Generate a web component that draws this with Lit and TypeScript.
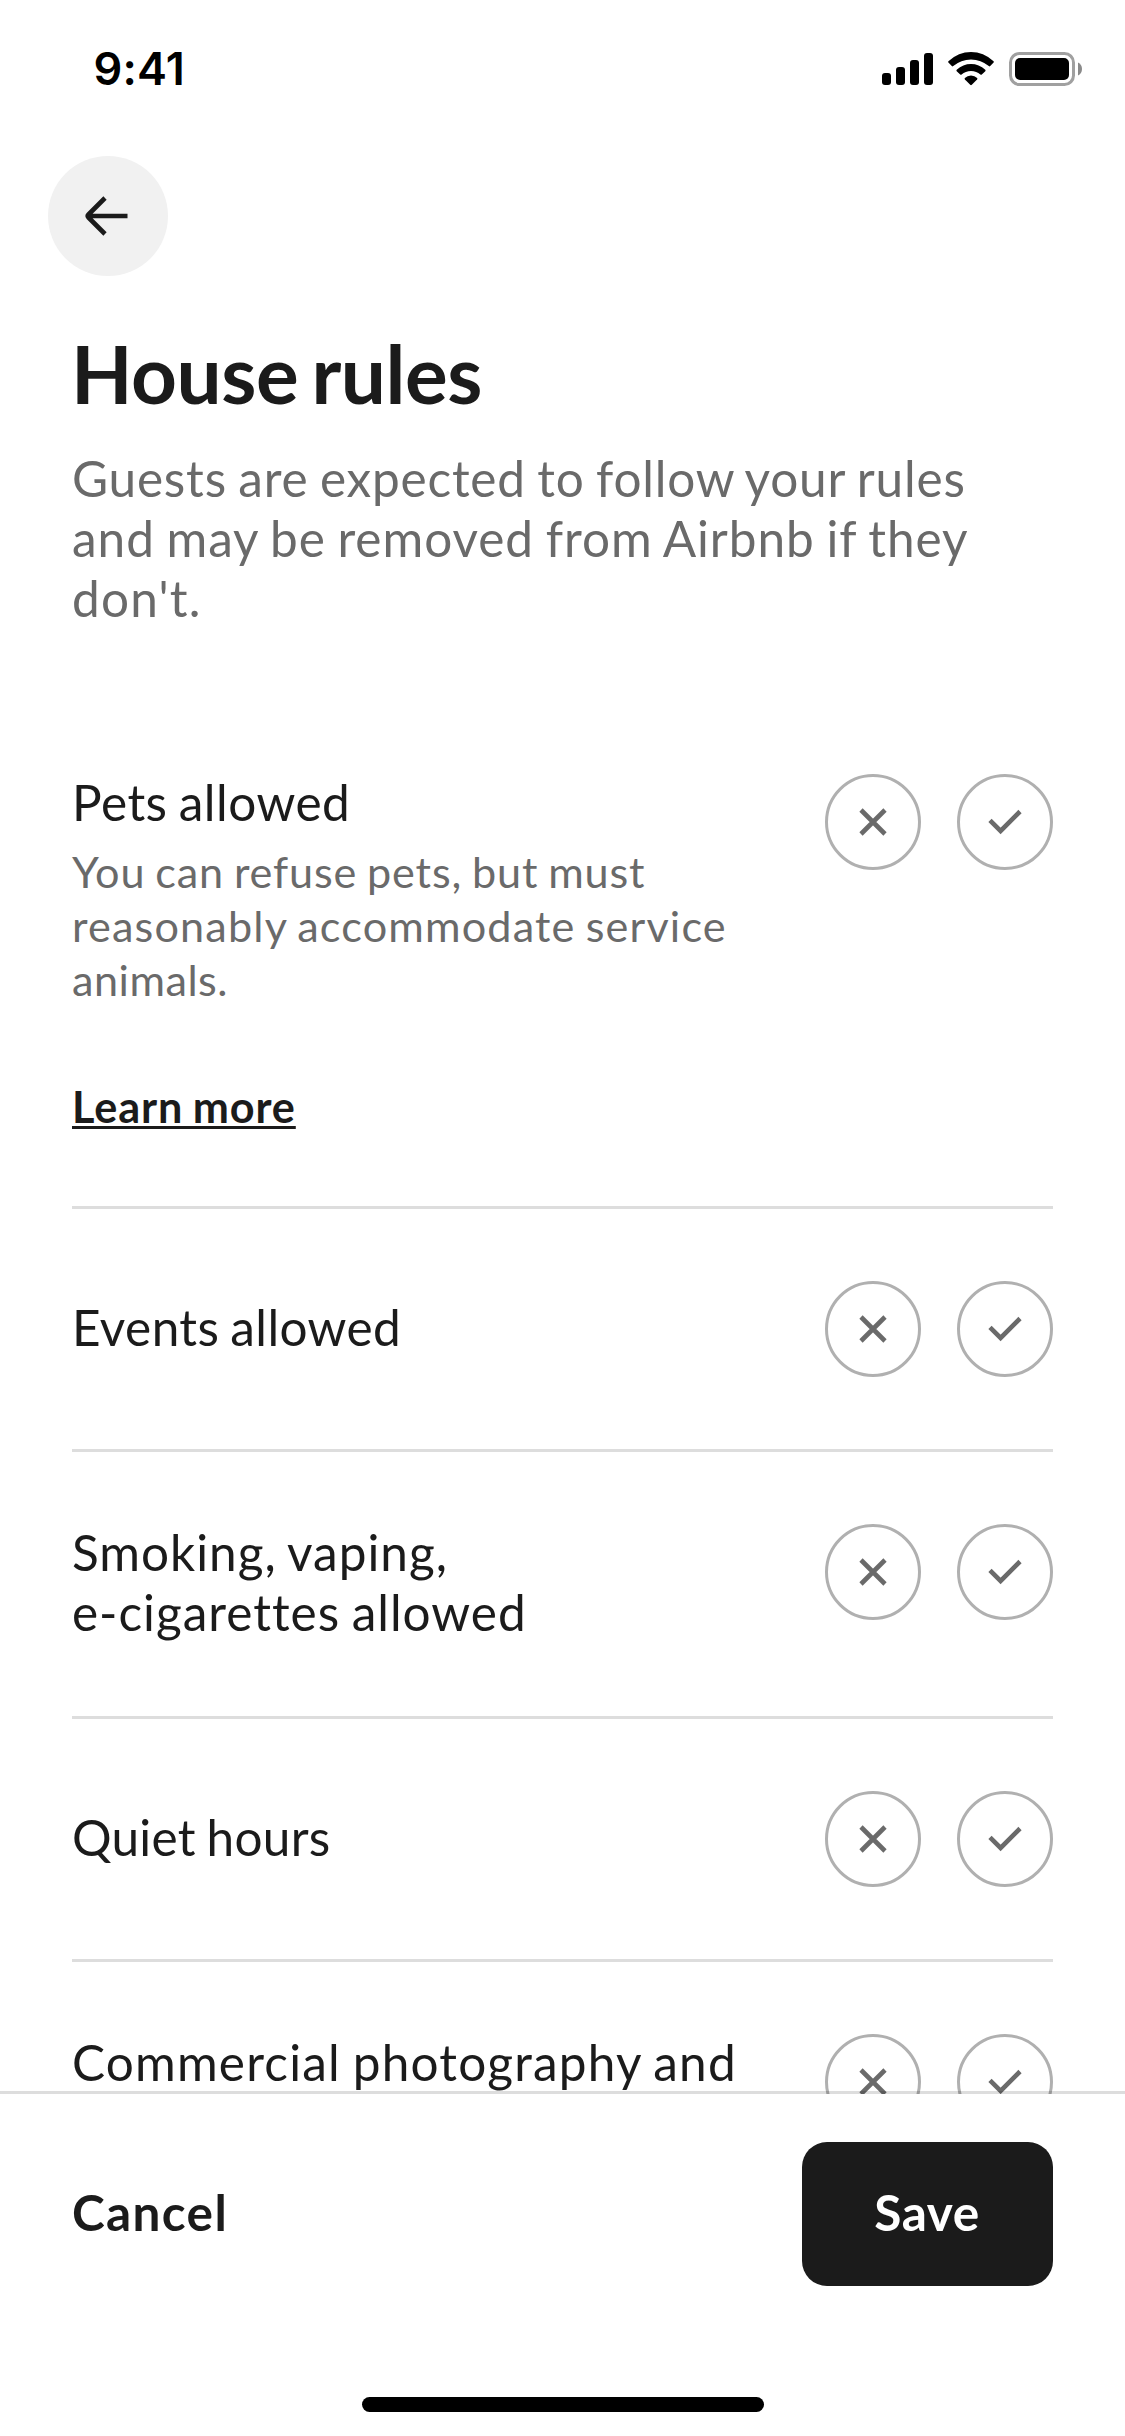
import { LitElement, html, css, svg, nothing } from "lit";
import { customElement, property } from "lit/decorators.js";
import { classMap } from "lit/directives/class-map.js";

/** One line of text and its tracking in pixels. */
type Line = [text: string, tracking: number];

interface Rule {
  title: Line[];
  detail?: Line[];
  link?: Line;
  top?: boolean;
}

const INTRO: Line[] = [
  ["Guests are expected to follow your rules", 0.8],
  ["and may be removed from Airbnb if they", 0.96],
  ["don't.", 1.2],
];

const RULES: Rule[] = [
  {
    title: [["Pets allowed", 0.5]],
    detail: [
      ["You can refuse pets, but must", 0.85],
      ["reasonably accommodate service", 1.16],
      ["animals.", 0.5],
    ],
    link: ["Learn more", 0.9],
  },
  { title: [["Events allowed", 0.4]] },
  { title: [["Smoking, vaping,", 0.99], ["e-cigarettes allowed", 0.98]] },
  { title: [["Quiet hours", 0.25]] },
  { title: [["Commercial photography and", 1.19]], top: true },
];

const lines = (list: Line[]) =>
  list.map(([text, tracking]) => html`<span class="line" style="letter-spacing:${tracking}px">${text}</span>`);

const lineStyles = css`
  .line {
    display: block;
    white-space: nowrap;
    word-spacing: -2px;
  }
`;

@customElement("status-bar")
export class StatusBar extends LitElement {
  static styles = css`
    :host {
      display: flex;
      justify-content: space-between;
      align-items: flex-start;
      box-sizing: border-box;
      height: 156px;
      padding: 42px 41px 0 93.5px;
      color: #000;
    }
    .time {
      font: 600 45px/54px Inter, "Liberation Sans", sans-serif;
      letter-spacing: 0.2px;
    }
    .icons {
      display: block;
      width: 204px;
      height: 38px;
      margin-top: 8px;
    }
  `;

  render() {
    return html`
      <span class="time">9:41</span>
      <svg class="icons" viewBox="880 50 204 38" aria-hidden="true">
        <rect x="882" y="73" width="9" height="12" rx="3" />
        <rect x="896" y="67" width="9" height="18" rx="3" />
        <rect x="910" y="60" width="9" height="25" rx="3" />
        <rect x="924" y="53" width="9" height="32" rx="3" />
        <path d="M948.4 61.2Q958.5 52 971 52T993.6 61.2Q994.2 61.9 993.6 62.6L990.2 66.1Q989.5 66.7 988.8 66.1Q981 59.4 971 59.4T953.2 66.1Q952.5 66.7 951.8 66.1L948.4 62.6Q947.8 61.9 948.4 61.2Z" />
        <path d="M956.7 69.8Q963 63.9 971 63.9T985.3 69.8Q985.9 70.5 985.3 71.2L981.8 74.5Q981.1 75.1 980.4 74.5Q976.5 71 971 71T961.6 74.5Q960.9 75.1 960.2 74.5L956.7 71.2Q956.1 70.5 956.7 69.8Z" />
        <path d="M964.9 78Q967.3 75.4 971 75.4T977.1 78Q977.8 78.8 977.1 79.6L971.8 84.8Q971 85.5 970.2 84.8L964.9 79.6Q964.2 78.8 964.9 78Z" />
        <rect x="1010.5" y="53.5" width="63" height="31" rx="9" fill="none" stroke="#a0a0a0" stroke-width="3" />
        <rect x="1015" y="58" width="54" height="22" rx="5" />
        <path d="M1078 62.5C1080.4 63.5 1082 66 1082 69S1080.4 74.500 1078 75.500Z" fill="#8a8a8a" />
      </svg>
    `;
  }
}

@customElement("rule-choice")
export class RuleChoice extends LitElement {
  static styles = css`
    :host {
      display: flex;
      gap: 36px;
    }
    .choice {
      box-sizing: border-box;
      width: 96px;
      height: 96px;
      padding: 0;
      border: 3px solid #b0b0b0;
      border-radius: 50%;
      background: #fff;
    }
    .glyph {
      display: block;
      width: 90px;
      height: 90px;
      fill: none;
      stroke: #6a6a6a;
      stroke-width: 4.6;
    }
  `;

  render() {
    return html`
      <button class="choice" aria-label="No">
        <svg class="glyph" viewBox="3 3 90 90">${svg`<path d="M36 36L60 60M60 36L36 60" />`}</svg>
      </button>
      <button class="choice" aria-label="Yes">
        <svg class="glyph" viewBox="3 3 90 90">${svg`<path d="M33 46.300L43.600 56.900L63 37.500" />`}</svg>
      </button>
    `;
  }
}

@customElement("rule-row")
export class RuleRow extends LitElement {
  @property({ attribute: false }) rule!: Rule;

  static styles = [
    lineStyles,
    css`
      :host {
        display: flex;
        justify-content: space-between;
        align-items: flex-start;
        padding: 72px 0;
        border-bottom: 3px solid #ddd;
      }
      .copy {
        display: flex;
        flex-direction: column;
        align-items: flex-start;
        justify-content: center;
        min-height: 96px;
      }
      .copy.top {
        justify-content: flex-start;
      }
      .title {
        margin: -2px 0 2px;
        font-size: 49.5px;
        line-height: 60px;
        color: #1b1b1b;
      }
      .detail {
        margin-top: 10px;
        font-size: 43.2px;
        line-height: 54px;
        color: #6a6a6a;
      }
      .link {
        margin: 73px 0 1px;
        font-size: 43.2px;
        font-weight: 700;
        line-height: 54px;
        color: #1b1b1b;
        text-decoration: underline;
        text-decoration-thickness: 3px;
        text-underline-offset: 3px;
      }
    `,
  ];

  render() {
    const { title, detail, link, top } = this.rule;
    return html`
      <div class=${classMap({ copy: true, top: !!top })}>
        <div class="title">${lines(title)}</div>
        ${detail ? html`<div class="detail">${lines(detail)}</div>` : nothing}
        ${link ? html`<a class="link">${lines([link])}</a>` : nothing}
      </div>
      <rule-choice></rule-choice>
    `;
  }
}

@customElement("app-root")
export class AppRoot extends LitElement {
  static styles = [
    lineStyles,
    css`
      :host {
        display: flex;
        flex-direction: column;
        width: 1125px;
        height: 2436px;
        overflow: hidden;
        background: #fff;
        color: #1b1b1b;
        font-family: Lato, "Open Sans", sans-serif;
      }
      .scroll {
        flex: none;
        box-sizing: border-box;
        height: 1938px;
        padding: 0 72px;
        overflow: hidden;
      }
      .back {
        display: block;
        width: 120px;
        height: 120px;
        margin-left: -24px;
        padding: 0;
        border: 0;
        border-radius: 50%;
        background: #f1f1f1;
      }
      .arrow {
        display: block;
        width: 120px;
        height: 120px;
        fill: none;
        stroke: #1b1b1b;
        stroke-width: 4.6;
        stroke-linejoin: round;
      }
      .heading {
        margin: 50px 0 0 -1px;
        font-size: 80px;
        font-weight: 700;
        line-height: 94px;
        letter-spacing: -0.4px;
        word-spacing: -6px;
      }
      .intro {
        margin: 28px 0 74px;
        font-size: 49.5px;
        line-height: 60px;
        color: #6a6a6a;
      }
      .footer {
        position: relative;
        flex: 1;
        display: flex;
        flex-direction: column;
        justify-content: space-between;
        align-items: center;
        box-sizing: border-box;
        margin-top: -3px;
        padding: 48px 72px 24px;
        border-top: 3px solid rgba(0, 0, 0, 0.133);
        background: #fff padding-box;
      }
      .actions {
        align-self: stretch;
        display: flex;
        justify-content: space-between;
        align-items: center;
      }
      .cancel,
      .save {
        border: 0;
        font: 700 49.5px/60px Lato, "Open Sans", sans-serif;
      }
      .cancel {
        padding: 0;
        margin-top: -4px;
        background: none;
        color: #1b1b1b;
        letter-spacing: 1.35px;
      }
      .save {
        box-sizing: border-box;
        width: 251px;
        height: 144px;
        padding: 0 1px 4px 0;
        border-radius: 25px;
        background: #1b1b1b;
        color: #fff;
        letter-spacing: 0.6px;
      }
      .home {
        width: 402px;
        height: 15px;
        border-radius: 8px;
        background: #000;
      }
    `,
  ];

  render() {
    return html`
      <status-bar></status-bar>
      <main class="scroll">
        <button class="back" aria-label="Back">
          <svg class="arrow" viewBox="0 0 120 120">
            <path d="M79.500 60H39.500M57 42L40.500 58.500Q39 60 40.500 61.500L57 78" />
          </svg>
        </button>
        <h1 class="heading">House rules</h1>
        <div class="intro">${lines(INTRO)}</div>
        ${RULES.map((rule) => html`<rule-row .rule=${rule}></rule-row>`)}
      </main>
      <footer class="footer">
        <div class="actions">
          <button class="cancel">Cancel</button>
          <button class="save">Save</button>
        </div>
        <div class="home"></div>
      </footer>
    `;
  }
}
